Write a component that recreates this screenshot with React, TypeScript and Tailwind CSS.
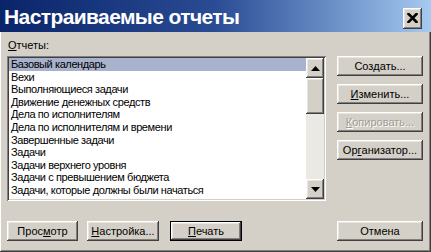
import React from "react";

const items = [
  "Базовый календарь",
  "Вехи",
  "Выполняющиеся задачи",
  "Движение денежных средств",
  "Дела по исполнителям",
  "Дела по исполнителям и времени",
  "Завершенные задачи",
  "Задачи",
  "Задачи верхнего уровня",
  "Задачи с превышением бюджета",
  "Задачи, которые должны были начаться",
];

const raised =
  "shadow-[inset_-1px_-1px_#404040,inset_1px_1px_#ffffff,inset_-2px_-2px_#808080,inset_2px_2px_#e8e6e0]";

function Btn({
  children,
  className = "",
  disabled = false,
  def = false,
}: {
  children: React.ReactNode;
  className?: string;
  disabled?: boolean;
  def?: boolean;
}) {
  return (
    <div
      className={`h-[20px] flex items-center justify-center bg-[#d4d0c8] ${
        def ? "border border-black" : ""
      } ${className}`}
    >
      <div
        className={`w-full h-full flex items-center justify-center ${raised} ${
          disabled ? "text-[#a09c94] [text-shadow:1px_1px_0_#ffffff]" : "text-black"
        }`}
      >
        {children}
      </div>
    </div>
  );
}

export default function App() {
  return (
    <div
      className="w-[431px] h-[252px] bg-[#d4d0c8] flex flex-col overflow-hidden text-[11px] shadow-[inset_-1px_-1px_#404040,inset_1px_1px_#ffffff,inset_-2px_-2px_#808080]"
      style={{ fontFamily: '"Liberation Sans", Arial, sans-serif' }}
    >
      <div className="h-[32px] flex items-center justify-between bg-gradient-to-r from-[#0a246a] via-[#2a4c94] to-[#a6caf0] pl-[4px] pr-[8px]">
        <span className="text-white font-bold text-[21px] leading-none tracking-[-0.6px] mt-[1px]">
          Настраиваемые отчеты
        </span>
        <div className={`w-[19px] h-[21px] bg-[#d4d0c8] flex items-center justify-center ${raised} mt-[4px] mr-[1px]`}>
          <svg width="11" height="10" viewBox="0 0 11 10">
            <path d="M1.5 1 L9.5 9 M9.5 1 L1.5 9" stroke="#000" strokeWidth="2.6" strokeLinecap="square" />
          </svg>
        </div>
      </div>
      <div className="flex flex-col px-[7px] pt-[6px]">
        <div className="h-[14px] leading-[14px] ml-[1px]">
          <span className="underline">О</span>тчеты:
        </div>
        <div className="flex mt-[4px]">
          <div className="w-[319px] h-[145px] bg-white flex shadow-[inset_1px_1px_#808080,inset_-1px_-1px_#ffffff,inset_2px_2px_#404040,inset_-2px_-2px_#d4d0c8] p-[2px]">
            <div className="flex-1 flex flex-col pt-0 tracking-[-0.4px]">
              {items.map((t, i) => (
                <div
                  key={t}
                  className={`h-[12.6px] leading-[12.6px] pl-[2px] whitespace-nowrap ${
                    i === 0 ? "bg-[#a8b2cc]" : ""
                  }`}
                >
                  {t}
                </div>
              ))}
            </div>
            <div className="w-[18px] flex flex-col bg-[#ebe9e4]">
              <div className={`h-[20px] bg-[#d4d0c8] flex items-center justify-center ${raised}`}>
                <svg width="9" height="5" viewBox="0 0 9 5">
                  <path d="M0 5 L4.5 0 L9 5 Z" fill="#000" />
                </svg>
              </div>
              <div className={`h-[36px] bg-[#d4d0c8] ${raised}`} />
              <div className="flex-1" />
              <div className={`h-[20px] bg-[#d4d0c8] flex items-center justify-center ${raised}`}>
                <svg width="9" height="5" viewBox="0 0 9 5">
                  <path d="M0 0 L4.5 5 L9 0 Z" fill="#000" />
                </svg>
              </div>
            </div>
          </div>
          <div className="ml-[11px] w-[86px] flex flex-col gap-[8px]">
            <Btn>
              Соз<span className="underline">д</span>ать...
            </Btn>
            <Btn>
              <span className="underline">И</span>зменить...
            </Btn>
            <Btn disabled>
              <span className="underline">К</span>опировать...
            </Btn>
            <Btn>
              Ор<span className="underline">г</span>анизатор...
            </Btn>
          </div>
        </div>
        <div className="flex mt-[20px]">
          <Btn className="w-[71px]">
            Прос<span className="underline">м</span>отр
          </Btn>
          <Btn className="w-[72px] ml-[9px]">
            <span className="underline">Н</span>астройка...
          </Btn>
          <Btn className="w-[72px] ml-[11px]" def>
            <span className="underline">П</span>ечать
          </Btn>
          <Btn className="w-[86px] ml-[95px]">Отмена</Btn>
        </div>
      </div>
    </div>
  );
}
